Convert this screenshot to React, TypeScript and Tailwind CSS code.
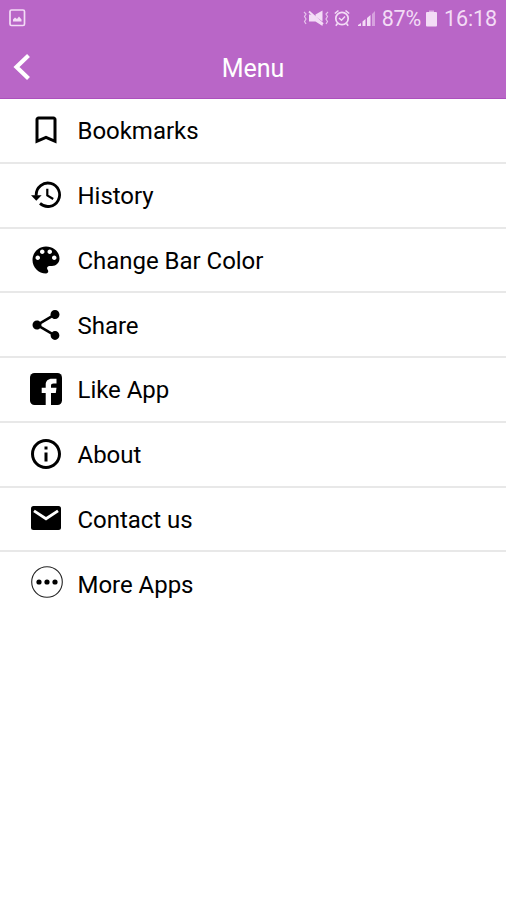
import type { ReactNode } from "react";
import { MdBookmarkBorder, MdInfoOutline, MdShare } from "react-icons/md";

type MenuItem = {
  label: string;
  icon: ReactNode;
};

function PictureIcon() {
  return (
    <svg width="17" height="18" viewBox="0 0 17 18" fill="none">
      <rect x="1" y="1" width="14.5" height="15.5" rx="1.5" stroke="currentColor" strokeWidth="1.7" />
      <path d="M4 12.5V10.5L6 8.5L8 10L10 7.5L12.5 10.5V12.5Z" fill="currentColor" />
    </svg>
  );
}

function MuteIcon() {
  return (
    <svg width="26" height="18" viewBox="0 0 26 18" fill="none" stroke="currentColor">
      <path d="M1 3L3 5L1.5 7.5L3 10L1.5 12.5L3 15M25 3L23 5L24.5 7.5L23 10L24.5 12.5L23 15" strokeWidth="1.2" opacity="0.8" />
      <path d="M12.5 5.5L19.5 1.5V12.5L12.5 7.5ZM6 5.5H9.5L19.5 14V17L12.5 12.5H6Z" fill="currentColor" stroke="none" />
      <path d="M6 2.5L20 15" strokeWidth="1.8" />
    </svg>
  );
}

function AlarmIcon() {
  return (
    <svg width="16" height="18" viewBox="0 0 16 18" fill="none" stroke="currentColor">
      <circle cx="8" cy="9.5" r="6.2" strokeWidth="1.7" />
      <path d="M5 9L7.5 11.3L11 7.5" strokeWidth="1.4" />
      <path d="M0.8 4.5L4.5 1.5M15.2 4.5L11.5 1.5M3.5 14.5L1.8 16.8M12.5 14.5L14.2 16.8" strokeWidth="1.6" />
    </svg>
  );
}

function SignalIcon() {
  return (
    <svg width="18" height="17" viewBox="0 0 18 17" fill="currentColor">
      <path d="M0 15L3 13V16H0ZM4.5 11.5L7.5 9V16H4.5ZM9 8L12.5 5V16H9Z" />
      <path d="M14 4L17 1V16H14Z" opacity="0.5" />
    </svg>
  );
}

function BatteryIcon() {
  return (
    <svg width="11" height="17" viewBox="0 0 11 17" fill="currentColor">
      <path d="M3 0.5H8V2H3Z" opacity="0.6" />
      <rect y="2" width="11" height="14.5" rx="1" />
    </svg>
  );
}

function HistoryIcon() {
  return (
    <svg width="36" height="36" viewBox="0 0 36 36" fill="none" stroke="#000">
      <path d="M8.2 18.7V17.8A11.7 11.7 0 1 1 12 26.4" strokeWidth="2.8" />
      <path d="M3 18.2H13.6L8.3 23.8Z" fill="#000" stroke="none" />
      <path d="M19.3 11.8V18.4L25.2 22" strokeWidth="2.2" />
    </svg>
  );
}

function PaletteIcon() {
  return (
    <svg width="36" height="36" viewBox="0 0 24 24">
      <path d="M12 3c-4.97 0-9 4.03-9 9s4.03 9 9 9c.83 0 1.5-.67 1.5-1.5 0-.39-.15-.74-.39-1.01-.23-.26-.38-.61-.38-.99 0-.83.67-1.5 1.5-1.5H16c2.76 0 5-2.24 5-5 0-4.42-4.03-8-9-8zm-5.5 9c-.83 0-1.5-.67-1.5-1.5S5.67 9 6.5 9 8 9.67 8 10.5 7.33 12 6.5 12zm3-4C8.67 8 8 7.33 8 6.5S8.67 5 9.5 5s1.5.67 1.5 1.5S10.33 8 9.5 8zm5 0c-.83 0-1.5-.67-1.5-1.5S13.67 5 14.5 5s1.5.67 1.5 1.5S15.33 8 14.5 8zm3 4c-.83 0-1.5-.67-1.5-1.5S16.67 9 17.5 9s1.5.67 1.5 1.5-.67 1.5-1.5 1.5z" />
    </svg>
  );
}

function FacebookIcon() {
  return (
    <svg width="32" height="32" viewBox="0 0 32 32">
      <rect width="32" height="32" rx="4.5" />
      <path d="M15.7 32V20H11.7V14.7H15.7V12C15.7 7.8 18 5.7 22 5.7H26.5V10.5H23.5C21.8 10.5 21 11.2 21 12.7V14.7H26.5L25.8 20H21V32Z" fill="#fff" />
    </svg>
  );
}

function MailIcon() {
  return (
    <svg width="30" height="24" viewBox="0 0 30 24" className="-mt-px">
      <rect width="30" height="24" rx="2.5" />
      <path d="M3 4.9L15 12.8L27 4.9" fill="none" stroke="#fff" strokeWidth="2.9" />
    </svg>
  );
}

function MoreIcon() {
  return (
    <svg width="34" height="34" viewBox="0 0 34 34" className="-mt-1 ml-0.5">
      <circle cx="17" cy="17" r="15.3" fill="none" stroke="#222" strokeWidth="1.1" />
      <circle cx="9" cy="17" r="2.6" />
      <circle cx="17" cy="17" r="2.6" />
      <circle cx="25" cy="17" r="2.6" />
    </svg>
  );
}

const items: MenuItem[] = [
  { label: "Bookmarks", icon: <MdBookmarkBorder size={36} /> },
  { label: "History", icon: <HistoryIcon /> },
  { label: "Change Bar Color", icon: <PaletteIcon /> },
  { label: "Share", icon: <MdShare size={36} /> },
  { label: "Like App", icon: <FacebookIcon /> },
  { label: "About", icon: <MdInfoOutline size={36} /> },
  { label: "Contact us", icon: <MailIcon /> },
  { label: "More Apps", icon: <MoreIcon /> },
];

function StatusBar() {
  return (
    <div className="flex h-9 items-center px-[9px] text-[#f3dcf6]">
      <PictureIcon />
      <div className="ml-auto flex items-center text-[21.5px] leading-9">
        <MuteIcon />
        <span className="ml-[5px]"><AlarmIcon /></span>
        <span className="ml-[8px]"><SignalIcon /></span>
        <span className="ml-[6px] pt-0.5 tracking-[-0.2px]">87%</span>
        <span className="ml-[5px]"><BatteryIcon /></span>
        <span className="ml-[7px] pt-0.5 tracking-[-0.1px]">16:18</span>
      </div>
    </div>
  );
}

function Header() {
  return (
    <header className="h-[99px] border-b border-[#ac50bd] bg-[#b966c7]">
      <StatusBar />
      <div className="grid h-[62px] grid-cols-[1fr_auto_1fr] items-center text-white">
        <button className="pl-[13px]" aria-label="Back">
          <svg width="18" height="28" viewBox="0 0 18 28" fill="none">
            <path d="M15.5 2.5L3.5 14L15.5 25.5" stroke="currentColor" strokeWidth="4.2" />
          </svg>
        </button>
        <h1 className="pt-[3px] text-[25px]">Menu</h1>
      </div>
    </header>
  );
}

export default function App() {
  return (
    <div className="min-h-screen bg-white font-['Roboto',sans-serif] text-black">
      <Header />
      <ul>
        {items.map((item) => (
          <li
            key={item.label}
            className="flex h-[64.75px] items-center border-b-2 border-[#e8e8e8] last:border-transparent"
          >
            <span className="ml-7 flex w-9 justify-center">{item.icon}</span>
            <span className="ml-[13.5px] pt-0.5 text-2xl tracking-[-0.03px]">{item.label}</span>
          </li>
        ))}
      </ul>
    </div>
  );
}
